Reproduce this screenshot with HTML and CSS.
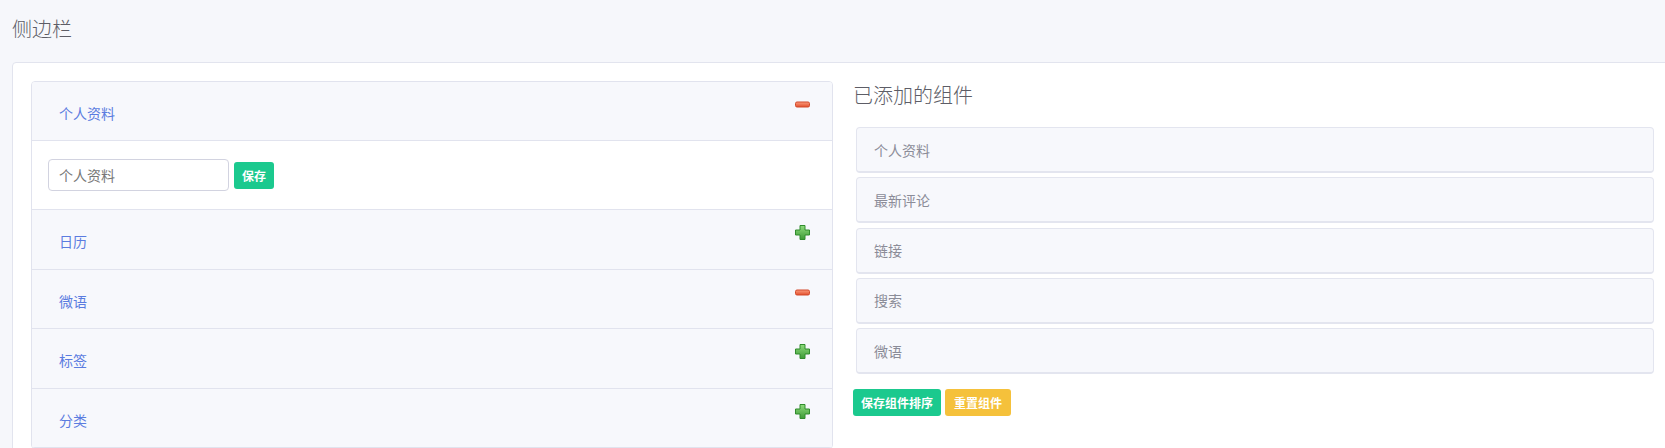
FILE: index.html
```html
<!DOCTYPE html>
<html lang="zh-CN">
<head>
<meta charset="utf-8">
<title>侧边栏</title>
<link rel="stylesheet" href="styles.css">
</head>
<body>
<div class="page">
  <div class="page-title">侧边栏</div>
  <div class="card">
    <div class="accordion">
      <div class="acc-head acc-first">
        <span class="acc-title">个人资料</span>
        <svg class="ico" width="15" height="15" viewBox="0 0 15 15"><defs><linearGradient id="gm1" x1="0" y1="0" x2="0" y2="1"><stop offset="0" stop-color="#fb9a7c"/><stop offset="1" stop-color="#e2502d"/></linearGradient></defs><rect x="0.5" y="5" width="14" height="5" rx="1.5" fill="url(#gm1)" stroke="#d2492a" stroke-width="1"/></svg>
      </div>
      <div class="acc-body">
        <input class="field" type="text" value="个人资料">
        <button class="btn btn-green btn-sm">保存</button>
      </div>
      <div class="acc-head">
        <span class="acc-title">日历</span>
        <svg class="ico" width="15" height="15" viewBox="0 0 15 15"><defs><linearGradient id="gp1" x1="0" y1="0" x2="0" y2="1"><stop offset="0" stop-color="#8fdc7d"/><stop offset="1" stop-color="#3d9a36"/></linearGradient></defs><path d="M5 0.5h5v4.5h4.5v5h-4.5v4.5h-5v-4.5h-4.5v-5h4.5z" fill="url(#gp1)" stroke="#318c2d" stroke-width="1" stroke-linejoin="round"/></svg>
      </div>
      <div class="acc-head">
        <span class="acc-title">微语</span>
        <svg class="ico" width="15" height="15" viewBox="0 0 15 15"><defs><linearGradient id="gm2" x1="0" y1="0" x2="0" y2="1"><stop offset="0" stop-color="#fb9a7c"/><stop offset="1" stop-color="#e2502d"/></linearGradient></defs><rect x="0.5" y="5" width="14" height="5" rx="1.5" fill="url(#gm2)" stroke="#d2492a" stroke-width="1"/></svg>
      </div>
      <div class="acc-head">
        <span class="acc-title">标签</span>
        <svg class="ico" width="15" height="15" viewBox="0 0 15 15"><defs><linearGradient id="gp2" x1="0" y1="0" x2="0" y2="1"><stop offset="0" stop-color="#8fdc7d"/><stop offset="1" stop-color="#3d9a36"/></linearGradient></defs><path d="M5 0.5h5v4.5h4.5v5h-4.5v4.5h-5v-4.5h-4.5v-5h4.5z" fill="url(#gp2)" stroke="#318c2d" stroke-width="1" stroke-linejoin="round"/></svg>
      </div>
      <div class="acc-head">
        <span class="acc-title">分类</span>
        <svg class="ico" width="15" height="15" viewBox="0 0 15 15"><defs><linearGradient id="gp3" x1="0" y1="0" x2="0" y2="1"><stop offset="0" stop-color="#8fdc7d"/><stop offset="1" stop-color="#3d9a36"/></linearGradient></defs><path d="M5 0.5h5v4.5h4.5v5h-4.5v4.5h-5v-4.5h-4.5v-5h4.5z" fill="url(#gp3)" stroke="#318c2d" stroke-width="1" stroke-linejoin="round"/></svg>
      </div>
    </div>
    <div class="added">
      <h3 class="added-title">已添加的组件</h3>
      <ul class="widget-list">
        <li class="widget">个人资料</li>
        <li class="widget">最新评论</li>
        <li class="widget">链接</li>
        <li class="widget">搜索</li>
        <li class="widget">微语</li>
      </ul>
      <div class="actions">
        <button class="btn btn-green">保存组件排序</button>
        <button class="btn btn-yellow">重置组件</button>
      </div>
    </div>
  </div>
</div>
</body>
</html>
```
FILE: styles.css
```css
html, body {
  margin: 0;
  padding: 0;
  overflow: hidden;
}
body {
  background: #f6f7fb;
  font-family: "Noto Sans CJK SC", "Noto Sans", sans-serif;
  color: #555;
}
.page {
  padding: 0 0 0 12px;
}
.page-title {
  height: 62px;
  box-sizing: border-box;
  padding-top: 16px;
  font-size: 20px;
  font-weight: 300;
  line-height: 26px;
  color: #5d5d66;
}
.card {
  width: 1660px;
  box-sizing: border-box;
  background: #fff;
  border: 1px solid #e2e4ee;
  border-radius: 4px;
  padding: 18px;
  display: grid;
  grid-template-columns: 802px 801px;
  column-gap: 20px;
  align-items: start;
  min-height: 420px;
}
.accordion {
  border: 1px solid #e1e3ee;
  border-radius: 4px;
  overflow: hidden;
}
.acc-head {
  height: 58.5px;
  border-bottom: 1px solid #e1e3ee;
  background: #f7f8fc;
  display: flex;
  justify-content: space-between;
  align-items: flex-start;
  padding: 0 22px 0 27px;
}
.acc-first {
  height: 58px;
}
.acc-title {
  margin-top: 21px;
  font-size: 14px;
  line-height: 20px;
  color: #5b7ce0;
}
.ico {
  margin-top: 15px;
  display: block;
}
.acc-body {
  height: 68px;
  border-bottom: 1px solid #e1e3ee;
  background: #fff;
  display: flex;
  align-items: center;
  gap: 5px;
  padding: 0 16px;
}
.field {
  width: 181px;
  height: 32px;
  box-sizing: border-box;
  border: 1px solid #d2d3e0;
  border-radius: 4px;
  padding: 0 10px;
  font-family: "Noto Sans CJK SC", "Noto Sans", sans-serif;
  font-size: 14px;
  color: #777;
  background: #fff;
  outline: none;
}
.btn {
  border: none;
  border-radius: 3px;
  height: 27px;
  padding: 0 8px;
  font-family: "Noto Sans CJK SC", "Noto Sans", sans-serif;
  font-size: 12px;
  font-weight: 700;
  color: #fff;
  cursor: pointer;
}
.btn-green {
  background: #1bc98e;
}
.btn-yellow {
  background: #f5c13b;
  padding: 0 9px;
}
.btn-sm {
  width: 40px;
  padding: 0;
}
.added-title {
  margin: 1px 0 19px 0;
  font-size: 20px;
  font-weight: 300;
  line-height: 26px;
  color: #5d5d66;
}
.widget-list {
  list-style: none;
  margin: 0 0 0 3px;
  padding: 0;
  display: flex;
  flex-direction: column;
  gap: 4.3px;
}
.widget {
  height: 46px;
  box-sizing: border-box;
  background: #f7f8fc;
  border: 1px solid #e3e5ef;
  border-bottom-width: 2px;
  border-radius: 4px;
  padding: 0 17px;
  display: flex;
  align-items: center;
  font-size: 14px;
  color: #8b8c98;
}
.actions {
  margin-top: 15px;
  display: flex;
  gap: 4px;
}
```
